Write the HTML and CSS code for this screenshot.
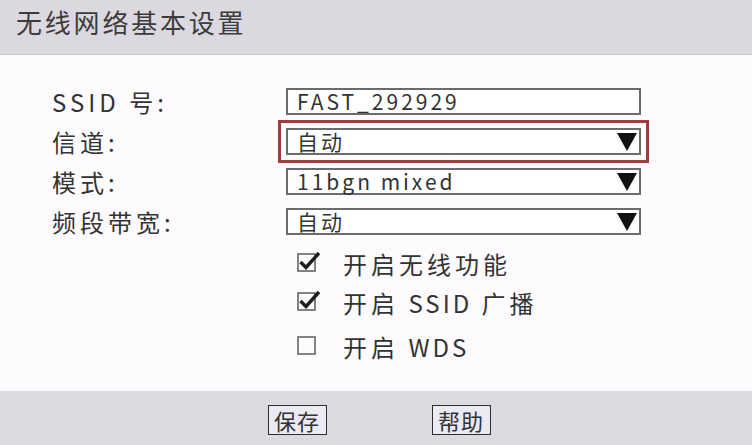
FILE: index.html
```html
<!DOCTYPE html>
<html lang="zh-CN">
<head>
<meta charset="utf-8">
<title>无线网络基本设置</title>
<link rel="stylesheet" href="styles.css">
</head>
<body>
<div class="page">
  <header class="header">
    <h1 class="title">无线网络基本设置</h1>
  </header>
  <main class="main">
    <div class="form">
      <div class="label">SSID 号:</div>
      <div class="field">FAST_292929</div>

      <div class="label">信道:</div>
      <div class="field select highlight">
        <span>自动</span>
        <svg class="arrow" width="20" height="18" viewBox="0 0 20 18"><polygon points="0,0 20,0 10,18" fill="#111"/></svg>
      </div>

      <div class="label">模式:</div>
      <div class="field select">
        <span>11bgn mixed</span>
        <svg class="arrow" width="20" height="18" viewBox="0 0 20 18"><polygon points="0,0 20,0 10,18" fill="#111"/></svg>
      </div>

      <div class="label">频段带宽:</div>
      <div class="field select">
        <span>自动</span>
        <svg class="arrow" width="20" height="18" viewBox="0 0 20 18"><polygon points="0,0 20,0 10,18" fill="#111"/></svg>
      </div>
    </div>

    <div class="checks">
      <div class="check">
        <svg class="box" width="24" height="24" viewBox="0 0 24 24"><rect x="1" y="5" width="17" height="17" fill="none" stroke="#666" stroke-width="1.6"/><path d="M3.5 13 L9 18.5 L22 4" fill="none" stroke="#1e1e1e" stroke-width="3.4" stroke-linejoin="miter"/></svg>
        <span>开启无线功能</span>
      </div>
      <div class="check">
        <svg class="box" width="24" height="24" viewBox="0 0 24 24"><rect x="1" y="5" width="17" height="17" fill="none" stroke="#666" stroke-width="1.6"/><path d="M3.5 13 L9 18.5 L22 4" fill="none" stroke="#1e1e1e" stroke-width="3.4" stroke-linejoin="miter"/></svg>
        <span>开启 <span class="latin">SSID</span> 广播</span>
      </div>
      <div class="check last">
        <svg class="box" width="24" height="24" viewBox="0 0 24 24"><rect x="1" y="5" width="17" height="17" fill="none" stroke="#666" stroke-width="1.6"/></svg>
        <span>开启 <span class="latin">WDS</span></span>
      </div>
    </div>
  </main>
  <footer class="footer">
    <button class="btn" type="button">保存</button>
    <button class="btn" type="button">帮助</button>
  </footer>
</div>
</body>
</html>
```

FILE: styles.css
```css
* { box-sizing: border-box; }

html, body {
  margin: 0;
  padding: 0;
}

body {
  width: 752px;
  height: 445px;
  overflow: hidden;
  font-family: "Noto Sans CJK SC", "Noto Sans", sans-serif;
  color: #333;
  background: #fdfbfe;
}

.page {
  display: flex;
  flex-direction: column;
  height: 445px;
}

.header {
  height: 55px;
  background: #dcd8df;
  border-bottom: 1px solid #cac6cd;
  padding: 6px 0 0 16px;
}

.title {
  margin: 0;
  font-size: 26px;
  font-weight: normal;
  line-height: 32px;
  letter-spacing: 2.8px;
  color: #3c3c3c;
}

.main {
  flex: 1;
  padding-top: 33px;
  background: #fdfbfe;
}

.form {
  display: grid;
  grid-template-columns: 234px 355px;
  grid-auto-rows: 27px;
  row-gap: 13px;
  padding-left: 52px;
}

.label {
  font-size: 24px;
  line-height: 27px;
  letter-spacing: 4px;
  color: #333;
}

.field {
  border: 2px solid #6b6b6b;
  background: #fff;
  padding-left: 9px;
  font-size: 21px;
  line-height: 23px;
  letter-spacing: 3px;
  color: #333;
  white-space: nowrap;
}

.select {
  display: flex;
  align-items: center;
  justify-content: space-between;
  padding-right: 2px;
}

.arrow {
  display: block;
}

.highlight {
  outline: 3px solid #a23b3e;
  outline-offset: 5px;
}

.checks {
  display: flex;
  flex-direction: column;
  gap: 7px;
  padding: 12px 0 0 297px;
}

.check {
  display: flex;
  align-items: center;
  gap: 22px;
  height: 32px;
  font-size: 24px;
  letter-spacing: 4px;
  color: #333;
}

.check.last {
  margin-top: 5px;
}

.latin {
  letter-spacing: 3px;
}

.box {
  display: block;
  margin-top: -5px;
}

.footer {
  height: 54px;
  background: #dcd9df;
  display: flex;
  justify-content: center;
  align-items: flex-start;
  gap: 105px;
  padding: 14px 0 0 6px;
}

.btn {
  width: 59px;
  height: 30px;
  padding: 0;
  border: 1px solid #2e2e2e;
  background: #ebe9f2;
  font-family: "Noto Sans CJK SC", "Noto Sans", sans-serif;
  font-size: 22px;
  line-height: 28px;
  letter-spacing: 1px;
  color: #333;
}
```
